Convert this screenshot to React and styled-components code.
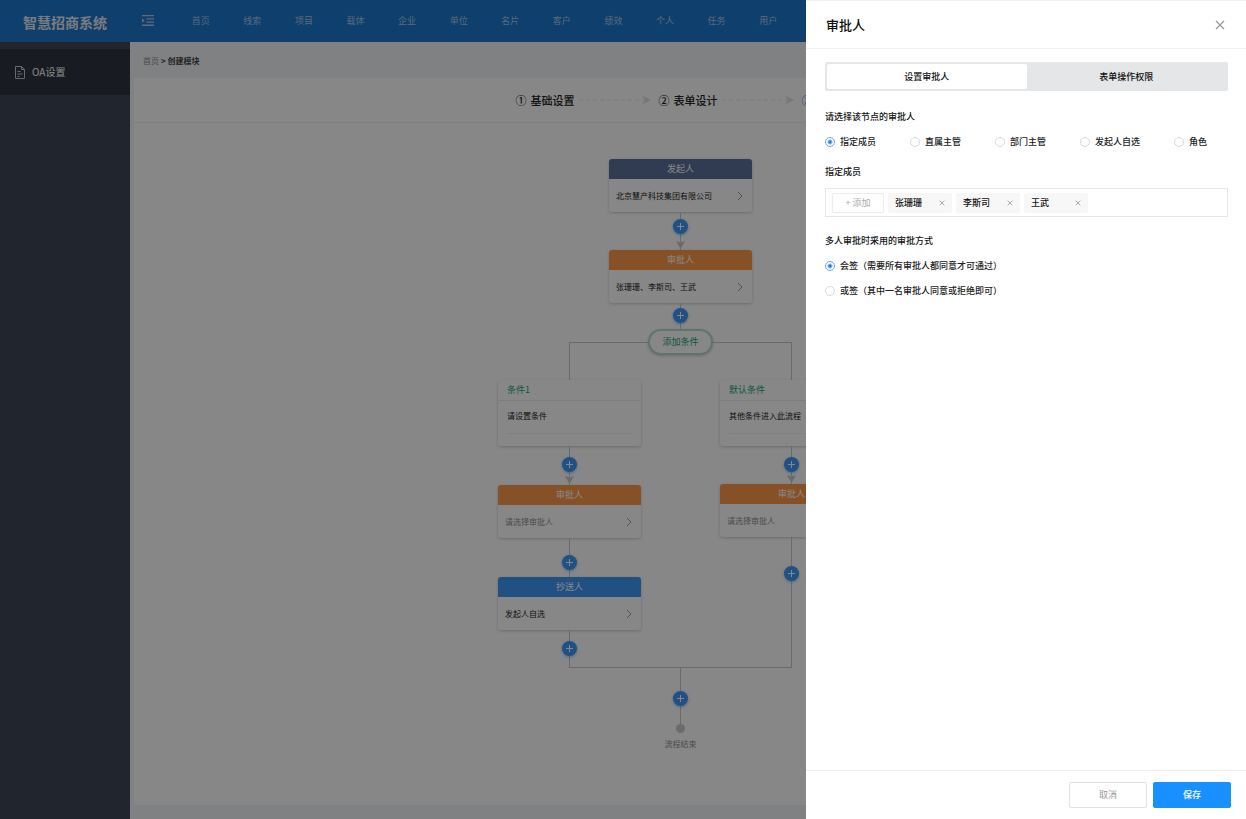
import React, { useState } from "react";
import styled, { createGlobalStyle, css } from "styled-components";

const GlobalStyle = createGlobalStyle`
  * {
    box-sizing: border-box;
  }
  body {
    margin: 0;
    background: #f1f3f7;
  }
  body, button, input {
    font-family: "Noto Sans CJK SC", "Noto Sans", sans-serif;
    font-size: 9px;
    line-height: 14px;
  }
  button {
    padding: 0;
    border: 0;
    background: none;
    color: inherit;
    cursor: pointer;
  }
  a {
    color: inherit;
    text-decoration: none;
  }
`;

const lineColor = "#c8c8c8";

const Page = styled.div`
  min-height: 100vh;
  display: flex;
  flex-direction: column;
`;

const Header = styled.header`
  height: 42px;
  display: flex;
  align-items: center;
  background: #1c77ce;
  color: #fff;
`;

const Logo = styled.h1`
  width: 130px;
  margin: 0;
  padding-top: 2px;
  text-align: center;
  font-size: 14px;
  line-height: 20px;
  font-weight: 700;
  color: #e4e8ec;
`;

const FoldButton = styled.button`
  width: 36px;
  height: 24px;
  display: flex;
  align-items: center;
  justify-content: center;
  color: #b4c8dc;
`;

const Nav = styled.nav`
  width: calc(50% - 4px);
  margin-left: 9px;
  display: grid;
  grid-template-columns: repeat(12, 1fr);
  text-align: center;
  color: #a9c8e6;
`;

const Body = styled.div`
  flex: 1;
  display: flex;
`;

const Sidebar = styled.aside`
  flex: 0 0 130px;
  padding-top: 7px;
  background: #3e4657;
`;

const SideItem = styled.a`
  height: 46px;
  padding: 0 14px;
  display: flex;
  align-items: center;
  gap: 6px;
  background: #2f3340;
  color: #fff;
  font-size: 10px;
`;

const Main = styled.main`
  flex: 1;
  min-width: 0;
  padding: 0 4px 14px;
  display: flex;
  flex-direction: column;
`;

const Breadcrumb = styled.nav`
  height: 36px;
  padding: 2px 9px 0;
  display: flex;
  align-items: center;
  gap: 2px;
  font-size: 8px;
  color: #8a8d92;

  strong {
    color: #45474b;
  }
`;

const Panel = styled.section`
  flex: 1;
  background: #fff;
`;

const Steps = styled.ol`
  height: 45px;
  margin: 0;
  padding: 0;
  display: flex;
  align-items: center;
  justify-content: center;
  list-style: none;
  border-bottom: 1px solid #f0f0f0;
  font-size: 11px;
  line-height: 16px;
  font-weight: 500;
`;

const Step = styled.li`
  display: flex;
  align-items: center;
  gap: 4px;
  color: ${props => (props.$active ? "#1f75e6" : "#222")};

  svg {
    margin-right: 8px;
  }
`;

const Flow = styled.div`
  padding: 36px 15px 32px 0;
  display: flex;
  flex-direction: column;
  align-items: center;
`;

const Card = styled.article`
  position: relative;
  width: 143px;
  border-radius: 3px;
  background: #fff;
  box-shadow: 0 1px 3px rgba(0, 0, 0, 0.2);
  overflow: hidden;
`;

const CardTitle = styled.h2`
  height: 20px;
  margin: 0;
  font-size: 9px;
  line-height: 20px;
  font-weight: 400;
  text-align: center;
  color: #fff;
  background: ${props => props.$color};
`;

const CardBody = styled.button`
  width: 100%;
  height: 33px;
  padding: 0 9px 0 7px;
  display: flex;
  align-items: center;
  justify-content: space-between;
  font-size: 8px;
  color: ${props => (props.$empty ? "#8f8f8f" : "#222")};
`;

const ConditionTitle = styled.h2`
  height: 21px;
  margin: 0;
  padding: 0 9px;
  border-bottom: 1px solid #ececec;
  font-size: 9px;
  line-height: 20px;
  font-weight: 400;
  color: #15a577;
`;

const ConditionBody = styled.div`
  height: 45px;
  padding: 8px 9px 12px;
  font-size: 8px;
  color: #222;

  p {
    height: 25px;
    margin: 0;
    border-bottom: 1px solid #f2f2f2;
  }
`;

const Connector = styled.div`
  position: relative;
  width: 143px;
  height: ${props => props.$height}px;
  padding-top: ${props => props.$before}px;
  display: flex;
  flex-direction: column;
  align-items: center;
  background: linear-gradient(${lineColor}, ${lineColor}) center / 1px 100%
    no-repeat;
`;

const AddButton = styled.button`
  width: 15px;
  height: 15px;
  display: flex;
  align-items: center;
  justify-content: center;
  border-radius: 50%;
  background: #3f97f6;
  color: #fff;
  box-shadow: 0 1px 3px rgba(50, 150, 250, 0.6);
`;

const ArrowHead = styled.svg`
  position: absolute;
  bottom: 1px;
`;

const AddCondition = styled.button`
  position: relative;
  z-index: 1;
  width: 65px;
  height: 26px;
  margin-bottom: -13px;
  border: 2px solid #b4dccd;
  border-radius: 13px;
  background: #fff;
  color: #15a577;
  box-shadow: 0 1px 3px rgba(0, 0, 0, 0.2);
`;

const BranchFrame = styled.div`
  width: 223px;
  padding-top: 37px;
  display: flex;
  justify-content: center;
  gap: 79px;
  border: 1px solid ${lineColor};
`;

const Branch = styled.div`
  flex: 0 0 143px;
`;

const EndDot = styled.span`
  width: 9px;
  height: 9px;
  border-radius: 50%;
  background: #cacaca;
`;

const EndText = styled.p`
  margin: 4px 0 0;
  font-size: 8px;
  color: #8f8f8f;
`;

const Overlay = styled.div`
  position: fixed;
  inset: 0;
  z-index: 10;
  background: rgba(0, 0, 0, 0.47);
`;

const Drawer = styled.aside`
  position: fixed;
  top: 0;
  right: 0;
  bottom: 0;
  z-index: 11;
  width: 440px;
  display: flex;
  flex-direction: column;
  background: #fff;
  color: #111;
`;

const DrawerHeader = styled.header`
  height: 49px;
  padding: 0 21px 0 20px;
  display: flex;
  align-items: center;
  justify-content: space-between;
  border-top: 1px solid #f1f1f1;
  border-bottom: 1px solid #f1f1f1;

  h2 {
    margin: 0;
    font-size: 13px;
    line-height: 20px;
    font-weight: 500;
  }
  button {
    display: flex;
    color: #999;
  }
`;

const DrawerBody = styled.div`
  flex: 1;
  padding: 13px 18px 0 19px;
`;

const Tabs = styled.div`
  height: 29px;
  padding: 2px;
  display: flex;
  border-radius: 2px;
  background: #e4e6e8;
`;

const Tab = styled.button`
  flex: 1;
  border-radius: 2px;
  font-weight: 500;
  ${props =>
    props.$active &&
    css`
      background: #fff;
    `}
`;

const Group = styled.fieldset`
  min-width: 0;
  margin: ${props => props.$top}px 0 0;
  padding: 0;
  border: 0;

  legend {
    padding: 0;
    font-weight: 500;
  }
`;

const Options = styled.div`
  margin-top: 11px;
  display: flex;
  flex-direction: ${props => (props.$column ? "column" : "row")};
  gap: ${props => (props.$column ? "11px" : "34px")};
`;

const RadioLabel = styled.label`
  display: flex;
  align-items: center;
  gap: 5px;
  white-space: nowrap;
  color: #222;
  font-weight: 500;
`;

const Radio = styled.input`
  appearance: none;
  flex: none;
  width: 10px;
  height: 10px;
  margin: 0;
  border: 1px solid #d9d9d9;
  border-radius: 50%;

  &:checked {
    border-color: #6cabec;
    background: radial-gradient(circle, #2080e0 0 1px, transparent 3px);
  }
`;

const Members = styled.div`
  height: 29px;
  margin-top: 9px;
  padding: 0 6px;
  display: flex;
  align-items: center;
  gap: 4px;
  border: 1px solid #e6e6e6;
`;

const AddMember = styled.button`
  width: 52px;
  height: 20px;
  border: 1px solid #ececec;
  border-radius: 2px;
  color: #aaa;
`;

const Tag = styled.span`
  width: 64px;
  height: 20px;
  padding: 0 7px;
  display: flex;
  align-items: center;
  justify-content: space-between;
  border-radius: 2px;
  background: #f7f7f7;
  font-weight: 500;

  button {
    display: flex;
    color: #aaa;
  }
`;

const DrawerFooter = styled.footer`
  height: 49px;
  padding: 0 15px;
  display: flex;
  align-items: center;
  justify-content: flex-end;
  gap: 6px;
  border-top: 1px solid #efefef;
`;

const FooterButton = styled.button`
  width: 78px;
  height: 26px;
  border: 1px solid ${props => (props.$primary ? "#1890ff" : "#e2e2e2")};
  border-radius: 2px;
  background: ${props => (props.$primary ? "#1890ff" : "#fff")};
  color: ${props => (props.$primary ? "#fff" : "#999")};
  font-weight: ${props => (props.$primary ? 500 : 400)};
`;

const FoldIcon = () => (
  <svg width="12" height="12" viewBox="0 0 12 12" fill="currentColor">
    <path d="M0 0h12v1.300H0zM4.500 3.200H12v1.300H4.500zM4.500 6.400H12v1.300H4.500zM0 9.600h12v1.300H0zM0 3.200l2.800 2.200L0 7.700z" />
  </svg>
);

const FileIcon = () => (
  <svg
    width="12"
    height="13"
    viewBox="0 0 12 13"
    fill="none"
    stroke="#c8c8c8"
  >
    <path d="M1.500.5h6l3 3v9h-9zM7.500.5v3h3M3.500 5.500h3M3.500 8h5M3.500 10.500h2" />
  </svg>
);

const Chevron = () => (
  <svg width="6" height="10" viewBox="0 0 6 10" fill="none" stroke="#999">
    <path d="M1 1l4 4-4 4" />
  </svg>
);

const Plus = () => (
  <svg width="7" height="7" viewBox="0 0 7 7" fill="none" stroke="currentColor">
    <path d="M3.500 0v7M0 3.500h7" />
  </svg>
);

const Cross = ({ size, width = 1 }) => (
  <svg
    width={size}
    height={size}
    viewBox="0 0 10 10"
    fill="none"
    stroke="currentColor"
    strokeWidth={width}
  >
    <path d="M1 1l8 8M9 1L1 9" />
  </svg>
);

const StepArrow = () => (
  <svg width="72" height="10" viewBox="0 0 72 10">
    <path d="M0 5h64" stroke="#e9e9e9" strokeDasharray="4 3" />
    <path d="M63 0.500L72 5l-9 4.500 2.500-4.500z" fill="#e0e0e0" />
  </svg>
);

const Link = ({ height, before, arrow }) => (
  <Connector $height={height} $before={before}>
    <AddButton aria-label="添加节点">
      <Plus />
    </AddButton>
    {arrow && (
      <ArrowHead width="9" height="8" viewBox="0 0 9 8">
        <path d="M0 0l4.500 1.500L9 0 4.500 8z" fill="#c8c8c8" />
      </ArrowHead>
    )}
  </Connector>
);

const colors = { start: "#5e719b", approver: "#ff9a4a", copy: "#3f97f6" };

const Node = ({ type, title, text, empty }) => (
  <Card>
    <CardTitle $color={colors[type]}>{title}</CardTitle>
    <CardBody $empty={empty}>
      {text}
      <Chevron />
    </CardBody>
  </Card>
);

const Condition = ({ title, text }) => (
  <Card>
    <ConditionTitle>{title}</ConditionTitle>
    <ConditionBody>
      <p>{text}</p>
    </ConditionBody>
  </Card>
);

const navItems = [
  "首页",
  "线索",
  "项目",
  "载体",
  "企业",
  "单位",
  "名片",
  "客户",
  "绩效",
  "个人",
  "任务",
  "用户"
];
const steps = ["基础设置", "表单设计", "流程设计"];
const approverTypes = [
  "指定成员",
  "直属主管",
  "部门主管",
  "发起人自选",
  "角色"
];
const signModes = [
  "会签（需要所有审批人都同意才可通过）",
  "或签（其中一名审批人同意或拒绝即可）"
];

const RadioGroup = ({ name, items, column }) => {
  const [value, setValue] = useState(items[0]);
  return (
    <Options $column={column}>
      {items.map(item => (
        <RadioLabel key={item}>
          <Radio
            type="radio"
            name={name}
            checked={value === item}
            onChange={() => setValue(item)}
          />
          {item}
        </RadioLabel>
      ))}
    </Options>
  );
};

const ApproverDrawer = () => {
  const [tab, setTab] = useState("设置审批人");
  const [members, setMembers] = useState(["张珊珊", "李斯司", "王武"]);

  const removeMember = name => {
    setMembers(members.filter(member => member !== name));
  };

  return (
    <Drawer>
      <DrawerHeader>
        <h2>审批人</h2>
        <button aria-label="关闭">
          <Cross size={10} width={1.2} />
        </button>
      </DrawerHeader>
      <DrawerBody>
        <Tabs role="tablist">
          {["设置审批人", "表单操作权限"].map(item => (
            <Tab
              key={item}
              role="tab"
              aria-selected={tab === item}
              $active={tab === item}
              onClick={() => setTab(item)}
            >
              {item}
            </Tab>
          ))}
        </Tabs>
        <Group $top={19}>
          <legend>请选择该节点的审批人</legend>
          <RadioGroup name="approver" items={approverTypes} />
        </Group>
        <Group $top={16}>
          <legend>指定成员</legend>
          <Members>
            <AddMember>+ 添加</AddMember>
            {members.map(name => (
              <Tag key={name}>
                {name}
                <button
                  aria-label={`移除${name}`}
                  onClick={() => removeMember(name)}
                >
                  <Cross size={6} width={1.6} />
                </button>
              </Tag>
            ))}
          </Members>
        </Group>
        <Group $top={17}>
          <legend>多人审批时采用的审批方式</legend>
          <RadioGroup name="sign" items={signModes} column />
        </Group>
      </DrawerBody>
      <DrawerFooter>
        <FooterButton>取消</FooterButton>
        <FooterButton $primary>保存</FooterButton>
      </DrawerFooter>
    </Drawer>
  );
};

const App = () => (
  <React.Fragment>
    <GlobalStyle />
    <Page>
      <Header>
        <Logo>智慧招商系统</Logo>
        <FoldButton aria-label="折叠菜单">
          <FoldIcon />
        </FoldButton>
        <Nav>
          {navItems.map(item => (
            <a key={item} href="#">
              {item}
            </a>
          ))}
        </Nav>
      </Header>
      <Body>
        <Sidebar>
          <SideItem href="#">
            <FileIcon />
            OA设置
          </SideItem>
        </Sidebar>
        <Main>
          <Breadcrumb>
            <a href="#">首页</a>
            <strong>&gt; 创建模块</strong>
          </Breadcrumb>
          <Panel>
            <Steps>
              {steps.map((step, index) => (
                <Step key={step} $active={index === 2}>
                  <span>{"①②③"[index]}</span>
                  <span>{step}</span>
                  {index < 2 && <StepArrow />}
                </Step>
              ))}
            </Steps>
            <Flow>
              <Node
                type="start"
                title="发起人"
                text="北京慧产科技集团有限公司"
              />
              <Link height={38} before={7} arrow />
              <Node
                type="approver"
                title="审批人"
                text="张珊珊、李斯司、王武"
              />
              <Link height={26} before={5} />
              <AddCondition>添加条件</AddCondition>
              <BranchFrame>
                <Branch>
                  <Condition title="条件1" text="请设置条件" />
                  <Link height={39} before={11} arrow />
                  <Node
                    type="approver"
                    title="审批人"
                    text="请选择审批人"
                    empty
                  />
                  <Link height={39} before={17} />
                  <Node type="copy" title="抄送人" text="发起人自选" />
                  <Link height={37} before={11} />
                </Branch>
                <Branch>
                  <Condition title="默认条件" text="其他条件进入此流程" />
                  <Link height={38} before={11} arrow />
                  <Node
                    type="approver"
                    title="审批人"
                    text="请选择审批人"
                    empty
                  />
                  <Link height={60} before={29} />
                </Branch>
              </BranchFrame>
              <Link height={56} before={23} />
              <EndDot />
              <EndText>流程结束</EndText>
            </Flow>
          </Panel>
        </Main>
      </Body>
      <Overlay />
      <ApproverDrawer />
    </Page>
  </React.Fragment>
);

export default App;
